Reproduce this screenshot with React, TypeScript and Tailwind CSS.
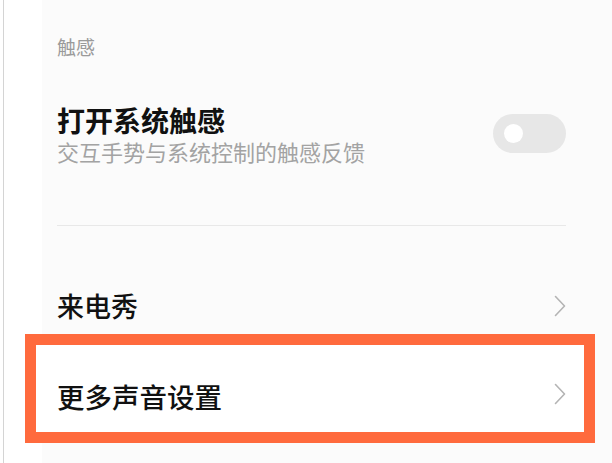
const font = { fontFamily: '"Noto Sans CJK SC", "Noto Sans", sans-serif' };

function Toggle() {
    return (
        <div className="flex h-[39px] w-[73px] shrink-0 items-center rounded-full bg-[#e7e7e7] pl-[11px]">
            <div className="h-[19px] w-[19px] rounded-full bg-white" />
        </div>
    );
}

function Chevron() {
    return (
        <svg width="12" height="22" viewBox="0 0 12 22" className="shrink-0">
            <path d="M1.5 1.5 L10.5 11 L1.5 20.5" fill="none" stroke="#b4b4b4" strokeWidth="1.6" strokeLinecap="round" strokeLinejoin="round" />
        </svg>
    );
}

export default function App() {
    return (
        <div className="flex h-[463px] w-[612px] overflow-hidden bg-white" style={font}>
            <div className="ml-[3px] h-full w-px bg-[#d4d4d4]" />
            <div className="flex flex-1 flex-col bg-[linear-gradient(to_right,#ffffff_38px,#fbfbfb_38px)]">
                <div className="h-[35px]" />
                <div className="pl-[53px] text-[19px] leading-[24px] text-[#9a9a9a]">触感</div>

                <div className="mt-[45px] flex items-center justify-between pl-[53px] pr-[46px]">
                    <div className="flex flex-col">
                        <div className="text-[28px] font-bold leading-[33px] text-[#111]">打开系统触感</div>
                        <div className="text-[22px] leading-[29px] text-[#a3a3a3]">交互手势与系统控制的触感反馈</div>
                    </div>
                    <div className="mb-[4px]">
                        <Toggle />
                    </div>
                </div>

                <div className="ml-[53px] mr-[46px] mt-[59px] h-px bg-[#e8e8e8]" />

                <div className="mt-[62px] flex h-[36px] items-center justify-between pl-[53px] pr-[46px]">
                    <span className="text-[27px] font-medium leading-[36px] text-[#111]">来电秀</span>
                    <Chevron />
                </div>

                <div className="ml-[21px] mt-[10px] flex h-[109px] w-[570px] items-center justify-between border-[11px] border-[#ff6a3d] bg-white pl-[21px] pr-[18px]">
                    <span className="mt-[14px] text-[27.5px] font-medium leading-[36px] text-[#111]">更多声音设置</span>
                    <span className="mt-[10px]">
                        <Chevron />
                    </span>
                </div>
            </div>
        </div>
    );
}
